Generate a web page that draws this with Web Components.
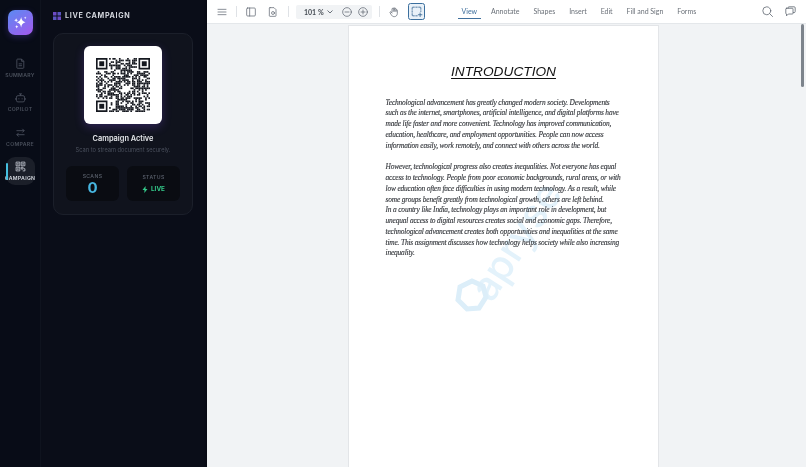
<!DOCTYPE html>
<html>
<head>
<meta charset="utf-8">
<title>Live Campaign</title>
<style>
  html, body { margin: 0; height: 100%; overflow: hidden; background: #080c16; }
  body { display: flex; width: 806px; height: 467px; font-family: "Inter", "Liberation Sans", sans-serif; }
  app-rail, campaign-panel, doc-viewer { filter: blur(.3px); }
</style>
</head>
<body>
<app-rail></app-rail>
<campaign-panel></campaign-panel>
<doc-viewer></doc-viewer>

<script>
const ICONS = {
  summary: '<path d="M3.500 1.500h5.500l3 3v8.500a1 1 0 0 1-1 1H3.500a1 1 0 0 1-1-1V2.500a1 1 0 0 1 1-1z"/><path d="M9 1.500v3h3M5 8h4.500M5 10.500h4.500"/>',
  copilot: '<rect x="2" y="5" width="11" height="8.500" rx="2"/><path d="M7.500 5V2.800M5.500 2.500h4M5.300 8.600v1.400M9.700 8.600v1.400M.8 8.500v2M14.200 8.500v2"/>',
  compare: '<path d="M2 5h10.500M10 2.500 12.500 5 10 7.500M13 10.500H2.500M5 8l-2.500 2.500L5 13"/>',
  campaign: '<path d="M1.500 1.500h5v5h-5zM8.500 1.500h5v5h-5zM1.500 8.500h5v5h-5z"/><path d="M8.500 8.500h2.500v2.500H8.500zM12 10.500h1.500v3H10.500M3.500 3.500h1v1h-1zM10.500 3.500h1v1h-1zM3.500 10.500h1v1h-1z"/>'
};

class RailItem extends HTMLElement {
  connectedCallback() {
    const active = this.hasAttribute('active');
    this.attachShadow({ mode: 'open' }).innerHTML = `
      <style>
        :host { display: block; width: 29px; height: 28px; position: relative; }
        .box { height: 100%; display: flex; flex-direction: column; align-items: center; justify-content: center;
               border-radius: 9px; gap: 3px; background: ${active ? '#1b1f29' : 'transparent'}; color: ${active ? '#c7ccd6' : '#4f5664'}; }
        svg { width: 11px; height: 11px; fill: none; stroke: currentColor; stroke-width: 1.100; }
        span { font-size: 5.200px; font-weight: 600; letter-spacing: .3px; line-height: 6px; white-space: nowrap; color: ${active ? '#d5d9e0' : '#4a505c'}; }
        i { position: absolute; left: 0; top: 6px; width: 2.500px; height: 17px; border-radius: 2px; background: #45bfe0; }
      </style>
      <div class="box"><svg viewBox="0 0 15 15">${ICONS[this.getAttribute('icon')]}</svg><span>${this.getAttribute('label')}</span></div>
      ${active ? '<i></i>' : ''}`;
  }
}
customElements.define('rail-item', RailItem);

class AppRail extends HTMLElement {
  constructor() {
    super();
    this.attachShadow({ mode: 'open' }).innerHTML = `
      <style>
        :host { display: flex; flex-direction: column; align-items: center; flex: 0 0 41px; box-sizing: border-box;
                padding-top: 10px; background: #080c17; border-right: 1px solid #0f131e; }
        .logo { width: 25px; height: 25px; border-radius: 7px; display: flex; align-items: center; justify-content: center;
                background: linear-gradient(145deg, #5a8bf2, #a558ee); box-shadow: 0 2px 6px rgba(110,80,230,.3); }
        .logo svg { width: 15px; height: 15px; }
        nav { display: flex; flex-direction: column; gap: 6.500px; margin-top: 18.500px; align-items: center; }
      </style>
      <div class="logo"><svg viewBox="0 0 24 24" fill="#fff"><path d="M13 3c.8 5 2.600 7.300 7 8.500-4.400 1.200-6.200 3.500-7 8.500-.8-5-2.600-7.300-7-8.500 4.400-1.200 6.200-3.500 7-8.500z"/><path d="M5 5 6 7.500l2.200.8L6 9.200 5 11.500 4 9.200l-2.200-.9L4 7.500zM6 16l.8 2 1.700.7-1.700.7-.8 2-.8-2-1.700-.7 1.700-.7zM19.500 2.500l.6 1.500 1.400.5-1.400.5-.6 1.500-.6-1.500-1.400-.5 1.400-.5z"/></svg></div>
      <nav>
        <rail-item icon="summary" label="SUMMARY"></rail-item>
        <rail-item icon="copilot" label="COPILOT"></rail-item>
        <rail-item icon="compare" label="COMPARE"></rail-item>
        <rail-item icon="campaign" label="CAMPAIGN" active></rail-item>
      </nav>`;
  }
}
customElements.define('app-rail', AppRail);

class QrCode extends HTMLElement {
  connectedCallback() {
    const n = 33;
    let seed = 4711;
    const rnd = () => (seed = (seed * 1103515245 + 12345) & 0x7fffffff) / 0x7fffffff;
    let rects = '';
    const inFinder = (x, y) => (x < 8 && y < 8) || (x > n - 9 && y < 8) || (x < 8 && y > n - 9);
    for (let y = 0; y < n; y++) for (let x = 0; x < n; x++) {
      if (!inFinder(x, y) && rnd() > 0.5) rects += `<rect x="${x}" y="${y}" width="1.020" height="1.020"/>`;
    }
    const finder = (x, y) => `<path fill-rule="evenodd" d="M${x} ${y}h7v7h-7zM${x + 1} ${y + 1}v5h5v-5z"/><rect x="${x + 2}" y="${y + 2}" width="3" height="3"/>`;
    this.attachShadow({ mode: 'open' }).innerHTML = `
      <style>
        :host { display: flex; align-items: center; justify-content: center; width: 78px; height: 78px; background: #fff;
                border-radius: 6px; box-shadow: 0 3px 10px rgba(125,80,230,.28); }
        svg { width: 54px; height: 54px; fill: #15181f; }
      </style>
      <svg viewBox="0 0 ${n} ${n}">${finder(0, 0)}${finder(n - 7, 0)}${finder(0, n - 7)}${rects}</svg>`;
  }
}
customElements.define('qr-code', QrCode);

class StatTile extends HTMLElement {
  constructor() {
    super();
    this.attachShadow({ mode: 'open' }).innerHTML = `
      <style>
        :host { display: flex; flex-direction: column; align-items: center; justify-content: center; gap: 1px;
                flex: 0 0 53px; height: 35px; border-radius: 6px; background: #0a0c12; }
        .label { font-size: 5.200px; font-weight: 500; letter-spacing: .35px; line-height: 8px; color: #5a606c; }
      </style>
      <div class="label"></div><slot></slot>`;
  }
  connectedCallback() { this.shadowRoot.querySelector('.label').textContent = this.getAttribute('label'); }
}
customElements.define('stat-tile', StatTile);

class CampaignPanel extends HTMLElement {
  constructor() {
    super();
    this.attachShadow({ mode: 'open' }).innerHTML = `
      <style>
        :host { display: flex; flex-direction: column; flex: 0 0 166px; box-sizing: border-box; padding: 11px 14px 0 12px; background: #0a0d18; }
        header { display: flex; align-items: center; gap: 4px; height: 9px; font-size: 7.200px; font-weight: 700;
                 letter-spacing: .65px; color: #d3d6dd; white-space: nowrap; }
        header svg { width: 8px; height: 8px; flex: none; }
        .card { display: flex; flex-direction: column; align-items: center; box-sizing: border-box; height: 182px; margin-top: 13px;
                padding-top: 12px; border: 1px solid #1b1f2a; border-radius: 10px; background: #10131d; }
        h2 { margin: 9px 0 0; font-size: 7.400px; line-height: 11px; font-weight: 600; color: #e4e6ea; }
        p { margin: 1px 0 0; font-size: 5.700px; line-height: 9px; color: #4b515e; white-space: nowrap; }
        .stats { display: flex; gap: 8px; margin-top: 12px; }
        .zero { font-size: 15px; line-height: 14px; font-weight: 700; color: #47b6e0; }
        .live { display: flex; align-items: center; gap: 3px; margin-top: 3px; font-size: 6.300px; line-height: 9px; font-weight: 700; color: #34c98a; }
        .live svg { width: 6px; height: 7px; fill: #34c98a; }
      </style>
      <header>
        <svg viewBox="0 0 8 8" fill="#6d4bc4"><rect width="3.500" height="3.500"/><rect x="4.500" width="3.500" height="3.500" fill="#5a55c0"/><rect y="4.500" width="3.500" height="3.500" fill="#5a55c0"/><rect x="4.500" y="4.500" width="3.500" height="3.500"/></svg>
        LIVE CAMPAIGN
      </header>
      <div class="card">
        <qr-code></qr-code>
        <h2>Campaign Active</h2>
        <p>Scan to stream document securely.</p>
        <div class="stats">
          <stat-tile label="SCANS"><div class="zero">0</div></stat-tile>
          <stat-tile label="STATUS"><div class="live"><svg viewBox="0 0 6 7"><path d="M3.600 0 .5 4h2L2.300 7 5.500 3h-2z"/></svg>LIVE</div></stat-tile>
        </div>
      </div>`;
  }
}
customElements.define('campaign-panel', CampaignPanel);

class ToolIcon extends HTMLElement {
  static paths = {
    menu: '<path d="M3 5h12M3 9h12M3 13h12"/>',
    panel: '<rect x="2.500" y="3" width="13" height="12" rx="1.500"/><path d="M7 3v12"/>',
    file: '<path d="M4.500 2.500h6l3 3v9a1 1 0 0 1-1 1h-8a1 1 0 0 1-1-1v-11a1 1 0 0 1 1-1z"/><circle cx="9" cy="10.500" r="2.200"/>',
    minus: '<circle cx="9" cy="9" r="6.500"/><path d="M6 9h6"/>',
    plus: '<circle cx="9" cy="9" r="6.500"/><path d="M6 9h6M9 6v6"/>',
    hand: '<path d="M6 9V4.500a1 1 0 0 1 2 0V8m0-4.500a1 1 0 0 1 2 0V8m0-3.500a1 1 0 0 1 2 0V8.500m0-2a1 1 0 0 1 2 0V11c0 3-2 5-4.500 5S6 15 4.500 12.500L3 10c-.6-1 .8-2 1.700-1L6 10.500"/>',
    select: '<path d="M3 6V4a1 1 0 0 1 1-1h2M8 3h2M12 3h2a1 1 0 0 1 1 1v2M15 8v1M3 8v2M3 12v2a1 1 0 0 0 1 1h2M8 15h2M14 11v5M11.500 13.500h5"/>',
    search: '<circle cx="8" cy="8" r="5.500"/><path d="m12 12 4 4"/>',
    chat: '<path d="M5.500 4.500V4a1.500 1.500 0 0 1 1.500-1.500h7A1.500 1.500 0 0 1 15.500 4v5a1.500 1.500 0 0 1-1.500 1.500h-1"/><path d="M3.500 4.500h8a1 1 0 0 1 1 1v6a1 1 0 0 1-1 1H6l-2.500 2.500v-2.500a1 1 0 0 1-1-1v-6a1 1 0 0 1 1-1z"/>'
  };
  connectedCallback() {
    const size = this.getAttribute('size') || 12;
    this.attachShadow({ mode: 'open' }).innerHTML = `
      <style>
        :host { display: inline-flex; flex: none; color: #5f6670; }
        svg { display: block; width: ${size}px; height: ${size}px; fill: none; stroke: currentColor; stroke-width: 1.100; stroke-linecap: round; stroke-linejoin: round; }
      </style>
      <svg viewBox="0 0 18 18">${ToolIcon.paths[this.getAttribute('name')]}</svg>`;
  }
}
customElements.define('tool-icon', ToolIcon);

class DocToolbar extends HTMLElement {
  constructor() {
    super();
    this.attachShadow({ mode: 'open' }).innerHTML = `
      <style>
        :host { display: flex; align-items: center; flex: 0 0 24px; box-sizing: border-box; height: 24px; padding-left: 9px;
                background: #fff; border-bottom: 1px solid #e4e7ea; font-family: "Lato", sans-serif; font-size: 7px; color: #6b7179; white-space: nowrap; }
        .sep { width: 1px; height: 11px; background: #dfe2e6; flex: none; }
        .zoom { display: flex; align-items: center; box-sizing: border-box; width: 76px; height: 14px; padding-left: 8px; background: #f1f3f5; border-radius: 2px; margin-left: 7px; }
        .zoom b { font-weight: 700; font-size: 7px; color: #474d55; width: 20px; }
        .chev { width: 6px; height: 4px; margin-left: 3px; fill: none; stroke: #6b727b; }
        .sel { display: flex; align-items: center; justify-content: center; box-sizing: border-box; width: 17px; height: 17px; margin-left: 8px;
               border: 1px solid #3b6f9e; border-radius: 2.500px; background: #e9f1f8; }
        .sel tool-icon { color: #2f5f8c; }
        nav { display: flex; align-items: center; gap: 13.900px; height: 100%; margin-left: 36.500px; }
        nav a { display: flex; align-items: center; box-sizing: border-box; height: 100%; padding-bottom: 2px; position: relative; }
        nav a.on { color: #3f6f9c; }
        nav a.on::after { content: ""; position: absolute; left: -4px; right: -4px; bottom: 4px; height: 1.500px; background: #3f6f9c; }
        .end { margin-left: auto; display: flex; align-items: center; gap: 10px; padding-right: 9px; }
      </style>
      <tool-icon name="menu"></tool-icon>
      <div class="sep" style="margin-left:8px"></div>
      <tool-icon name="panel" style="margin-left:8px"></tool-icon>
      <tool-icon name="file" style="margin-left:10px"></tool-icon>
      <div class="sep" style="margin-left:9px"></div>
      <div class="zoom">
        <b>101 %</b>
        <svg class="chev" viewBox="0 0 6 4"><path d="m.5.5 2.500 2.500L5.500.5"/></svg>
        <tool-icon name="minus" style="margin-left:8px"></tool-icon>
        <tool-icon name="plus" style="margin-left:4px"></tool-icon>
      </div>
      <div class="sep" style="margin-left:7px"></div>
      <tool-icon name="hand" style="margin-left:8px"></tool-icon>
      <div class="sel"><tool-icon name="select" size="13"></tool-icon></div>
      <nav>
        <a class="on">View</a><a>Annotate</a><a>Shapes</a><a>Insert</a><a>Edit</a><a>Fill and Sign</a><a>Forms</a>
      </nav>
      <div class="end">
        <tool-icon name="search" size="13"></tool-icon>
        <tool-icon name="chat" size="13"></tool-icon>
      </div>`;
  }
}
customElements.define('doc-toolbar', DocToolbar);

class DocPage extends HTMLElement {
  constructor() {
    super();
    this.attachShadow({ mode: 'open' }).innerHTML = `
      <style>
        :host { display: block; position: relative; box-sizing: border-box; width: 311px; height: 442px; padding-top: 37px;
                background: #fff; border: 1px solid #e3e5e8; border-bottom: 0; overflow: hidden; }
        h1 { margin: 0; text-align: center; font: italic 400 13.700px/18px "Liberation Sans", sans-serif; color: #111; text-decoration: underline; text-underline-offset: 1.500px; text-decoration-thickness: 1px; }
        p { position: relative; margin: 0 0 0 36.500px; font: italic 400 7.400px/10.780px "Liberation Serif", serif; letter-spacing: -.16px; color: #33363b; white-space: pre; -webkit-text-stroke: .12px #33363b; }
        .first { margin-top: 16.600px; }
        .second { margin-top: 10.700px; }
        .mark { position: absolute; left: 93px; top: 139px; width: 130px; height: 140px; pointer-events: none; }
        .mark span { position: absolute; left: 8px; top: 56px; font: 500 40px/40px "Inter", sans-serif; color: #e3f2fb; transform: rotate(-57deg); white-space: nowrap; }
        .mark svg { position: absolute; left: 12px; top: 112px; width: 36px; height: 36px; fill: none; stroke: #dcEEf9; stroke-width: 5; }
      </style>
      <div class="mark"><span>apryse</span><svg viewBox="0 0 36 36"><path d="M18 4 29 9l3 11-7 11-12 1-9-9 2-13z"/></svg></div>
      <h1>INTRODUCTION</h1>
      <p class="first">Technological advancement has greatly changed modern society. Developments
such as the internet, smartphones, artificial intelligence, and digital platforms have
made life faster and more convenient. Technology has improved communication,
education, healthcare, and employment opportunities. People can now access
information easily, work remotely, and connect with others across the world.</p>
      <p class="second">However, technological progress also creates inequalities. Not everyone has equal
access to technology. People from poor economic backgrounds, rural areas, or with
low education often face difficulties in using modern technology. As a result, while
some groups benefit greatly from technological growth, others are left behind.
In a country like India, technology plays an important role in development, but
unequal access to digital resources creates social and economic gaps. Therefore,
technological advancement creates both opportunities and inequalities at the same
time. This assignment discusses how technology helps society while also increasing
inequality.</p>`;
  }
}
customElements.define('doc-page', DocPage);

class DocViewer extends HTMLElement {
  constructor() {
    super();
    this.attachShadow({ mode: 'open' }).innerHTML = `
      <style>
        :host { display: flex; flex-direction: column; flex: 1; min-width: 0; background: #f1f3f5; box-shadow: -1px 0 2px rgba(0,0,0,.25); position: relative; }
        .stage { flex: 1; display: flex; padding: 1px 0 0 141px; position: relative; overflow: hidden; }
        .thumb { position: absolute; right: 2px; top: 0; width: 3.500px; height: 63px; border-radius: 2px; background: #7d848c; }
      </style>
      <doc-toolbar></doc-toolbar>
      <div class="stage"><doc-page></doc-page><div class="thumb"></div></div>`;
  }
}
customElements.define('doc-viewer', DocViewer);
</script>
</body>
</html>
